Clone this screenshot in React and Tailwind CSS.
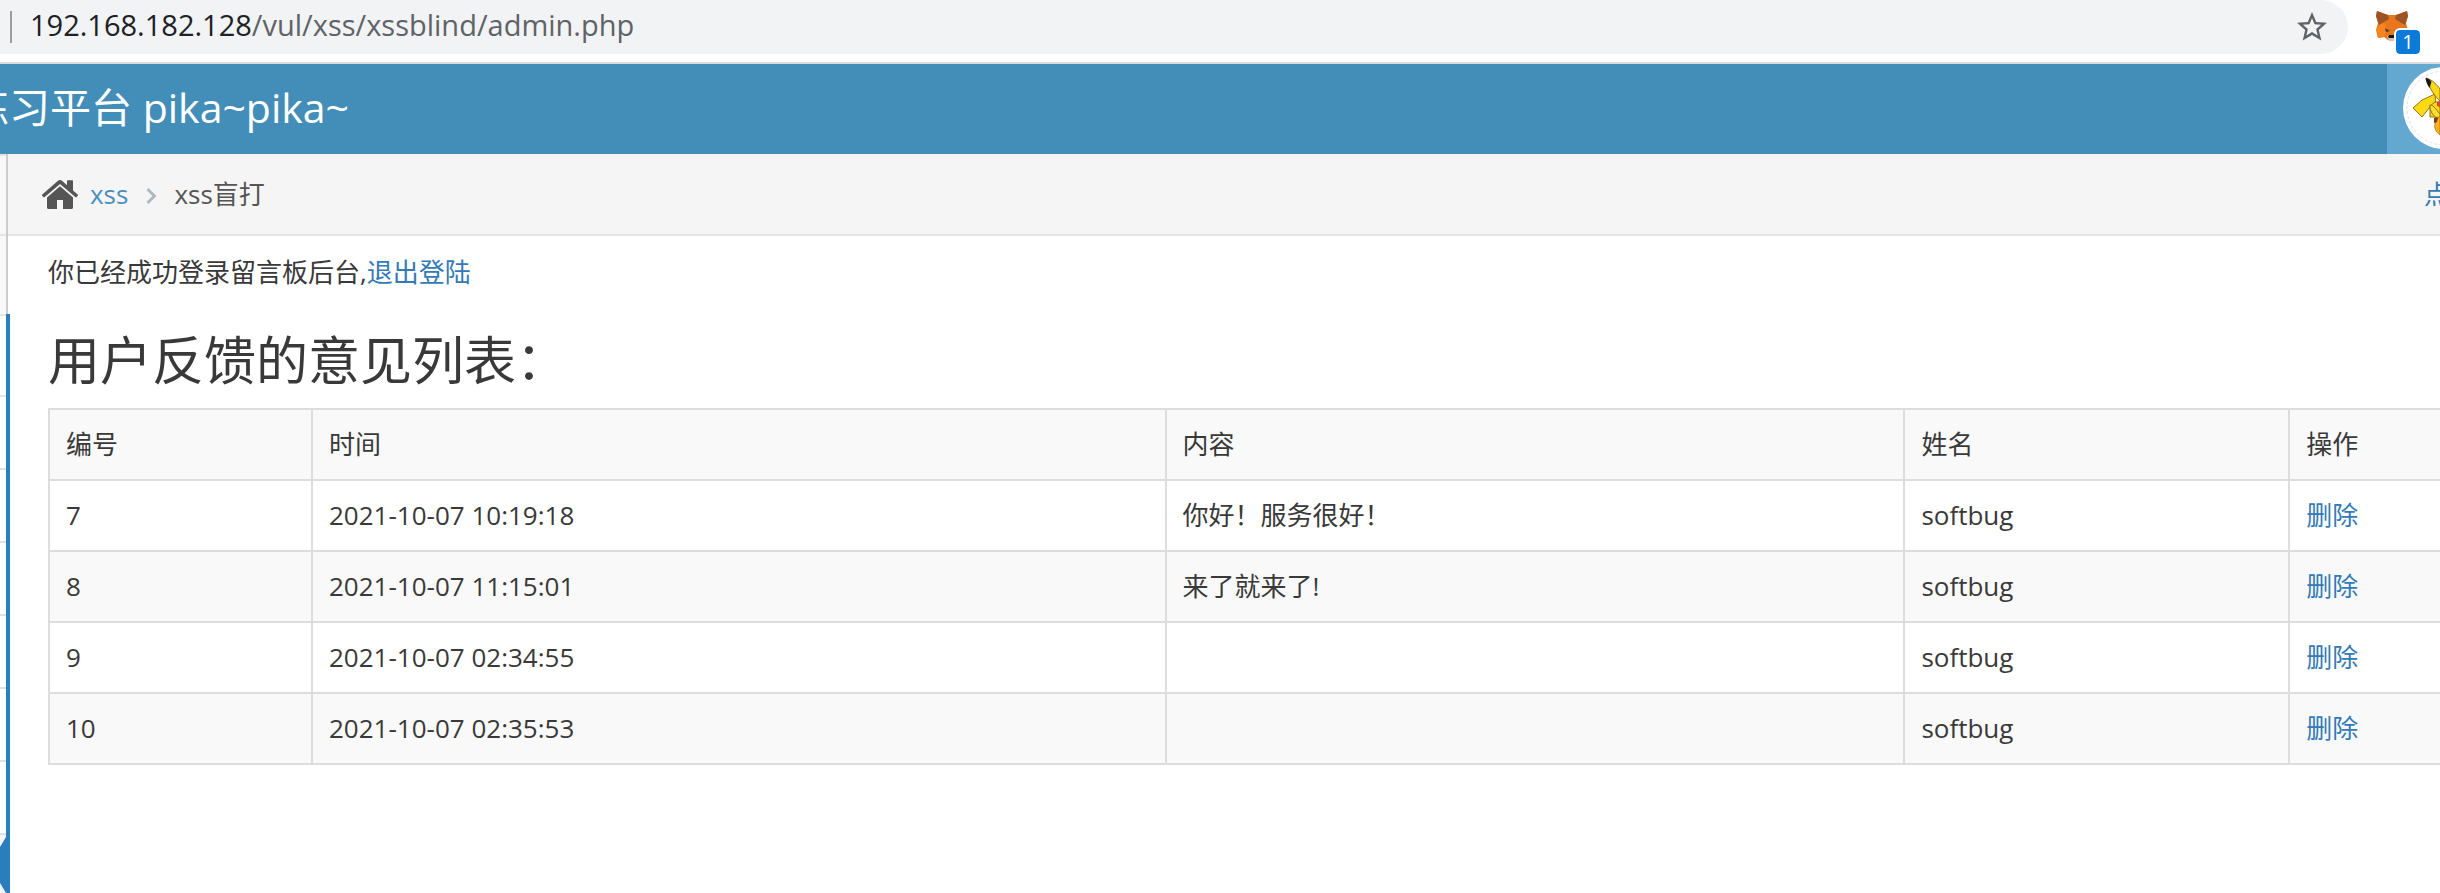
import React from "react";

const comments = [
  { id: 7, time: "2021-10-07 10:19:18", content: "你好！服务很好！", name: "softbug" },
  { id: 8, time: "2021-10-07 11:15:01", content: "来了就来了!", name: "softbug" },
  { id: 9, time: "2021-10-07 02:34:55", content: "", name: "softbug" },
  { id: 10, time: "2021-10-07 02:35:53", content: "", name: "softbug" },
];

function Star() {
  return (
    <svg viewBox="0 0 24 24" fill="#5f6368" className="h-9 w-9" aria-hidden="true">
      <path d="m22 9.240-7.190-.62L12 2 9.190 8.630 2 9.240l5.460 4.730L5.820 21 12 17.270 18.180 21l-1.630-7.030zM12 15.400l-3.760 2.270 1-4.280-3.320-2.880 4.380-.38L12 6.100l1.710 4.040 4.380.38-3.320 2.880 1 4.280z" />
    </svg>
  );
}

function Fox() {
  return (
    <svg viewBox="0 0 32 30" className="h-[30px] w-8" aria-hidden="true">
      <path d="M1 0 12 4h8L31 0l1 5-2 7 2 7-2 8-6-1-4 3h-8l-4-3-6 1-2-8 2-7L0 5z" fill="#e8761b" />
      <path d="m2 14 6-2 4 7-4 7-6 1-1-8z" fill="#f6851f" />
      <path d="M1 0 12 4l1 4-5 3-5 3-3-9z" fill="#9c5326" />
      <path d="M31 0 20 4l-1 4 5 3 5 3 3-9z" fill="#9c5326" />
      <path d="m9 17 5 3-4 1z" fill="#4a3a34" />
      <path d="m23 17-5 3 4 1z" fill="#4a3a34" />
      <path d="m11 25 3-1h5l3 1-2 5h-7z" fill="#d7c1b3" />
      <path d="m12 26 1-2h6l1 2-1 1h-6z" fill="#161616" />
    </svg>
  );
}

function Pikachu() {
  return (
    <svg viewBox="0 0 53 90" className="h-full w-full" aria-hidden="true">
      <circle cx="57" cy="44" r="41" fill="#fff" />
      <circle cx="57" cy="44" r="37" fill="none" stroke="#cfe3f0" strokeDasharray="3 2" />
      <g stroke="#8a7420" strokeWidth="1" strokeLinejoin="round">
        <path d="m26 44 9-8 13-6 1 14-6-1-8 10z" fill="#fcd913" />
        <path d="M39 14c7 2 11 7 14 11v12c-5-4-10-12-14-23z" fill="#fcd913" />
        <path d="M43 53V42l5-4h5v25l-5-10z" fill="#fcd913" />
        <path d="M43 41c4 0 7 6 10 9v5c-5 0-11-8-10-14z" fill="#fddf2b" />
        <path d="M48 60c1-4 3-7 5-8v19c-4-3-6-7-5-11z" fill="#f9b21a" stroke="#b98213" />
      </g>
      <path d="M38.500 14c2.500 0 4.500 2 6 4l-2 6c-2-3-3.500-6-4-10z" fill="#161616" />
      <path d="m50 38 3-1v6l-3-1z" fill="#e2452a" />
      <path d="m47 54 4-1-1 5-3 1z" fill="#7c3a1c" />
    </svg>
  );
}

function Home() {
  return (
    <svg viewBox="0 0 36 29" fill="#555" className="h-[29px] w-9" aria-hidden="true">
      <path d="M18 0c.8 0 1.400.3 2 .8l5 4.400V1.200c0-.7.4-1 1-1h4c.7 0 1 .4 1 1v9.200l4.700 4.100c.4.4.4.800.1 1.200l-1.200 1.300c-.4.4-.9.4-1.300.1L18 3.900 2.700 17.100c-.4.3-.9.3-1.300-.1L.2 15.700c-.3-.4-.3-.8.1-1.200L16 .8c.6-.5 1.200-.8 2-.8z" />
      <path d="M18 6.300 31 17.400v10.100c0 .9-.6 1.500-1.500 1.500H21v-9h-6v9H6.500C5.600 29 5 28.400 5 27.500V17.400z" />
    </svg>
  );
}

function AddressBar() {
  return (
    <header className="flex h-16 items-start overflow-hidden border-b-2 border-[#dcdcdc] bg-white">
      <div className="flex h-[54px] flex-1 items-center rounded-r-full bg-[#f1f3f4] pl-[10px] pr-[18px]">
        <span className="h-8 w-[2px] bg-[#9b9ea1]" />
        <p className="flex-1 pb-1 pl-[18px] text-[29px] leading-8 text-[#5f6368]">
          <span className="text-[#202124]">192.168.182.128</span>/vul/xss/xssblind/admin.php
        </p>
        <button type="button" aria-label="收藏">
          <Star />
        </button>
      </div>
      <button type="button" aria-label="MetaMask" className="relative ml-7 mr-8 mt-[11px]">
        <Fox />
        <span className="absolute left-5 top-[19px] flex h-6 w-6 items-center justify-center rounded bg-[#0b7ad8] text-[20px] leading-6 text-white outline-2 outline-white">
          1
        </span>
      </button>
    </header>
  );
}

function NavBar() {
  return (
    <nav className="flex h-[90px] items-stretch overflow-hidden bg-[#438eb9] text-white">
      <div className="flex min-w-0 flex-1 items-center pb-1">
        <a href="#" className="-ml-8 whitespace-nowrap text-[41px] leading-[60px]">
          练习平台 pika~pika~
        </a>
      </div>
      <a href="#" aria-label="用户" className="w-[53px] bg-[#62a8d1]">
        <Pikachu />
      </a>
    </nav>
  );
}

function SideBar() {
  return (
    <aside className="relative flex w-2 shrink-0 flex-col">
      <div className="flex flex-col border-r-2 border-[#ccc] bg-[#f8f8f8]">
        <span className="h-[82px] border-y-2 border-[#e5e5e5]" />
        <span className="h-[78px]" />
      </div>
      <div className="flex flex-1 flex-col">
        <span className="h-[83px] border-y-2 border-[#e5e5e5]" />
        {[0, 1, 2, 3, 4, 5].map((i) => (
          <span key={i} className="h-[73px] border-b-2 border-dashed border-[#e0e0e0]" />
        ))}
        <span className="flex-1 bg-[#f2f6f9]" />
      </div>
      <div className="absolute bottom-0 left-[6px] top-40 w-1 bg-[#2b7dbc]" />
      <svg viewBox="0 0 6 56" className="absolute bottom-0 left-0 h-14 w-[6px]" aria-hidden="true">
        <path d="M6 0v56L0 46V10z" fill="#2b7dbc" />
      </svg>
    </aside>
  );
}

function Breadcrumbs() {
  return (
    <div className="flex h-[82px] items-center justify-between overflow-hidden border-b-2 border-[#e5e5e5] bg-[#f5f5f5] pl-[34px] leading-[40px] text-[#555]">
      <ol className="flex items-center">
        <li className="flex items-center">
          <Home />
          <a href="#" className="ml-3 text-[#4c8fbd]">xss</a>
        </li>
        <li className="flex items-center">
          <svg viewBox="0 0 10 16" className="ml-[18px] mr-[18px] mt-1 h-4 w-[10px]" fill="none" stroke="#b2b6bf" strokeWidth="3" aria-hidden="true">
            <path d="m1.500 1 7 7-7 7" />
          </svg>
          xss盲打
        </li>
      </ol>
      <a href="#" className="w-4 whitespace-nowrap text-[#337ab7]">点</a>
    </div>
  );
}

function CommentTable() {
  const cell = "border-2 border-[#ddd] p-4";
  const last = "border-2 border-r-0 border-[#ddd] p-4";
  return (
    <table className="w-full table-fixed border-collapse text-left leading-[37px]">
      <thead>
        <tr className="bg-[#f9f9f9]">
          <th className={`${cell} w-[11%] font-normal`}>编号</th>
          <th className={`${cell} w-[35.7%] font-normal`}>时间</th>
          <th className={`${cell} w-[30.9%] font-normal`}>内容</th>
          <th className={`${cell} w-[16.1%] font-normal`}>姓名</th>
          <th className={`${last} font-normal`}>操作</th>
        </tr>
      </thead>
      <tbody>
        {comments.map((c) => (
          <tr key={c.id} className="even:bg-[#f9f9f9]">
            <td className={cell}>{c.id}</td>
            <td className={cell}>{c.time}</td>
            <td className={cell}>{c.content}</td>
            <td className={cell}>{c.name}</td>
            <td className={last}>
              <a href="#" className="text-[#337ab7]">删除</a>
            </td>
          </tr>
        ))}
      </tbody>
    </table>
  );
}

export default function App() {
  return (
    <div className="flex min-h-screen flex-col overflow-hidden bg-white font-['Open_Sans','Noto_Sans_CJK_SC',sans-serif] text-[26px] text-[#393939]">
      <AddressBar />
      <NavBar />
      <div className="flex flex-1">
        <SideBar />
        <main className="min-w-0 flex-1">
          <Breadcrumbs />
          <div className="pl-10 pt-4">
            <p className="leading-[40px]">
              你已经成功登录留言板后台,<a href="#" className="text-[#337ab7]">退出登陆</a>
            </p>
            <h1 className="mb-5 mt-10 text-[52px] leading-[56px]">用户反馈的意见列表：</h1>
            <CommentTable />
          </div>
        </main>
      </div>
    </div>
  );
}
